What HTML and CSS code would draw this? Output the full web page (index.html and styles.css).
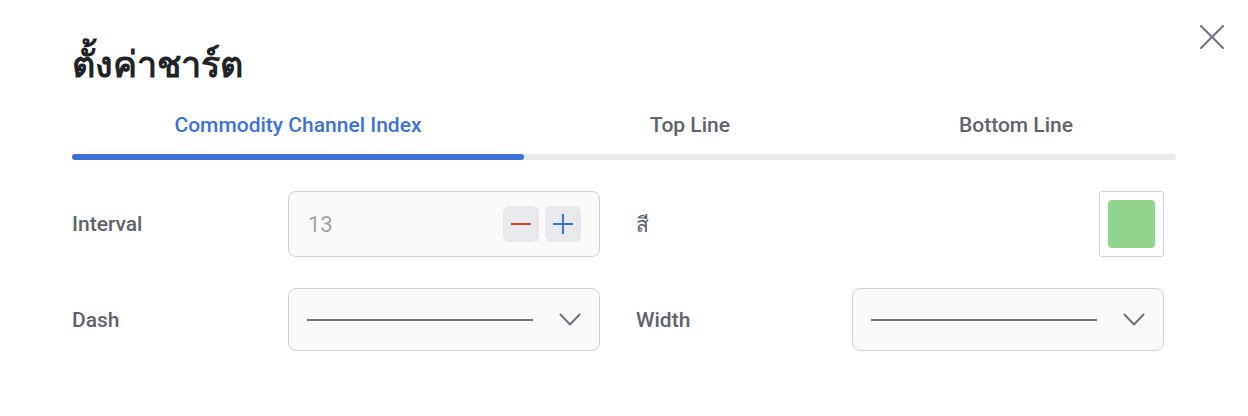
FILE: index.html
```html
<!DOCTYPE html>
<html lang="th">
<head>
<meta charset="utf-8">
<title>ตั้งค่าชาร์ต</title>
<link rel="stylesheet" href="styles.css">
</head>
<body>
<div class="dialog">
  <button class="close" aria-label="close">
    <svg width="24" height="24" viewBox="0 0 24 24"><path d="M1 1 L23 23 M23 1 L1 23" stroke="#6e7080" stroke-width="2" stroke-linecap="round" fill="none"/></svg>
  </button>
  <h1 class="title">ตั้งค่าชาร์ต</h1>
  <div class="tabs">
    <div class="tab active">Commodity Channel Index</div>
    <div class="tab">Top Line</div>
    <div class="tab">Bottom Line</div>
  </div>
  <div class="track"><div class="indicator"></div></div>
  <div class="form">
    <div class="row">
      <div class="label">Interval</div>
      <div class="number">
        <span class="value">13</span>
        <span class="btn minus"><svg width="20" height="20" viewBox="0 0 20 20"><path d="M0 10 H20" stroke="#d0482b" stroke-width="2"/></svg></span>
        <span class="btn plus"><svg width="20" height="20" viewBox="0 0 20 20"><path d="M0 10 H20 M10 0 V20" stroke="#3d72d9" stroke-width="2"/></svg></span>
      </div>
    </div>
    <div class="row">
      <div class="label">สี</div>
      <div class="swatch"><div class="swatch-fill"></div></div>
    </div>
    <div class="row">
      <div class="label">Dash</div>
      <div class="select">
        <span class="line"></span>
        <svg class="chev" width="22" height="14" viewBox="0 0 22 14"><path d="M1.5 1.5 L11 11.5 L20.5 1.5" stroke="#6b7280" stroke-width="2" fill="none" stroke-linecap="round" stroke-linejoin="round"/></svg>
      </div>
    </div>
    <div class="row">
      <div class="label">Width</div>
      <div class="select">
        <span class="line"></span>
        <svg class="chev" width="22" height="14" viewBox="0 0 22 14"><path d="M1.5 1.5 L11 11.5 L20.5 1.5" stroke="#6b7280" stroke-width="2" fill="none" stroke-linecap="round" stroke-linejoin="round"/></svg>
      </div>
    </div>
  </div>
</div>
</body>
</html>
```
FILE: styles.css
```css
html, body {
  margin: 0;
  padding: 0;
  background: #ffffff;
}
body {
  font-family: Roboto, "Noto Sans", "DejaVu Sans", sans-serif;
  width: 1248px;
  height: 416px;
  overflow: hidden;
}
.dialog {
  position: relative;
  padding: 40px 72px 0 72px;
}
.close {
  position: absolute;
  top: 25px;
  right: 24px;
  width: 24px;
  height: 24px;
  padding: 0;
  border: 0;
  background: none;
  display: block;
}
.close svg { display: block; }
.title {
  margin: 0;
  font-size: 36px;
  line-height: 50px;
  font-weight: 700;
  color: #202327;
}
.tabs {
  display: grid;
  grid-template-columns: 452px 332px 320px;
  margin-top: 15px;
}
.tab {
  text-align: center;
  font-size: 21px;
  font-weight: 500;
  line-height: 40px;
  color: #5f636b;
}
.tab.active {
  color: #3d72d9;
}
.track {
  margin-top: 9px;
  height: 6px;
  border-radius: 3px;
  background: #ebebeb;
}
.indicator {
  width: 452px;
  height: 6px;
  border-radius: 3px;
  background: #3d72d9;
}
.form {
  margin-top: 31px;
  display: grid;
  grid-template-columns: 528px 528px;
  column-gap: 36px;
  row-gap: 31px;
  align-items: center;
}
.row {
  display: grid;
  grid-template-columns: 216px 312px;
  align-items: center;
}
.label {
  font-size: 21px;
  font-weight: 500;
  color: #5f636b;
}
.number {
  box-sizing: border-box;
  height: 66px;
  display: flex;
  align-items: center;
  gap: 6px;
  padding: 0 18px 0 19px;
  background: #fafafa;
  border: 1px solid #d2d3d8;
  border-radius: 8px;
}
.value {
  flex: 1;
  font-size: 22px;
  color: #9ea3ab;
}
.btn {
  width: 36px;
  height: 36px;
  border-radius: 6px;
  background: #e8e9ec;
  display: flex;
  align-items: center;
  justify-content: center;
}
.btn svg { display: block; }
.swatch {
  justify-self: end;
  box-sizing: border-box;
  width: 65px;
  height: 66px;
  padding: 8px;
  border: 1px solid #d2d3d8;
  border-radius: 3px;
  background: #ffffff;
}
.swatch-fill {
  width: 100%;
  height: 100%;
  border-radius: 4px;
  background: #90d38a;
}
.select {
  box-sizing: border-box;
  height: 63px;
  display: flex;
  align-items: center;
  padding: 0 18px 0 18px;
  background: #fafafa;
  border: 1px solid #d2d3d8;
  border-radius: 8px;
}
.line {
  flex: 1;
  height: 2px;
  background: #737373;
  margin-right: 26px;
}
.chev { display: block; }
```
